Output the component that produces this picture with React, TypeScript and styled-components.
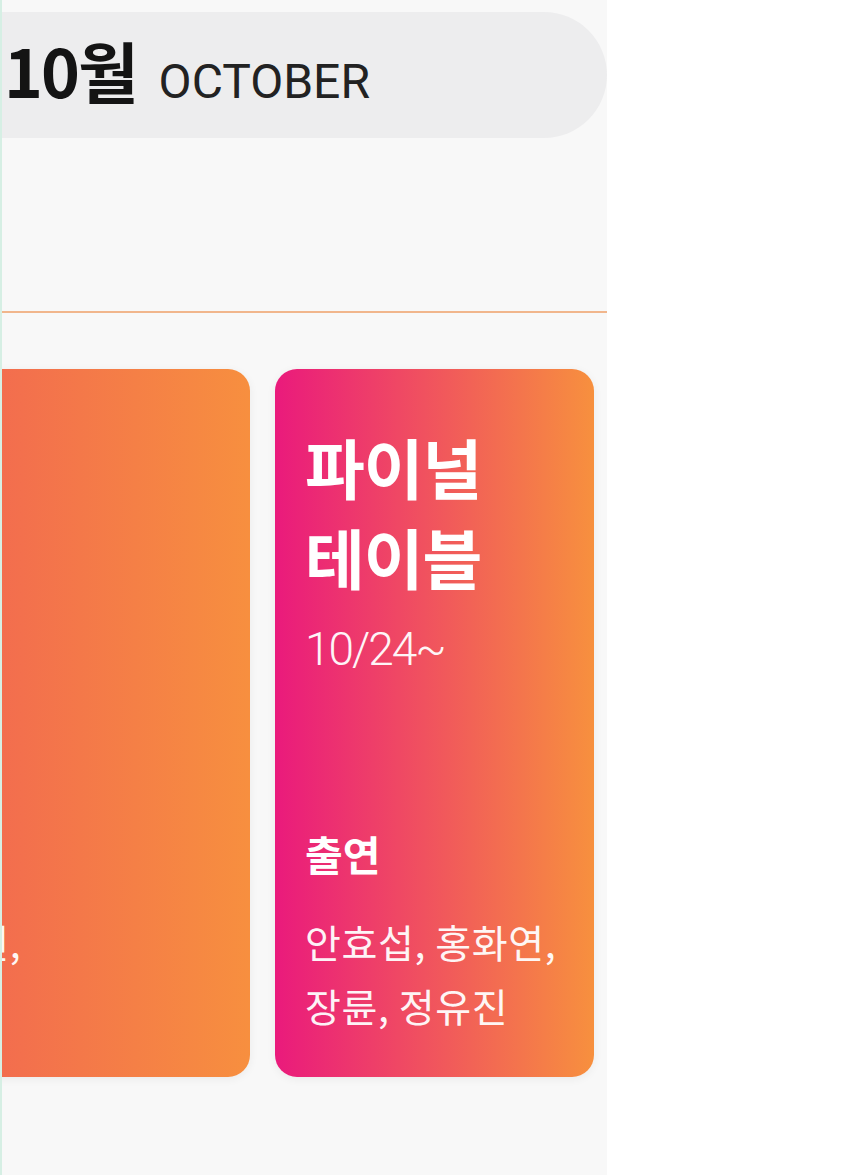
import styled, { createGlobalStyle } from 'styled-components';

const GlobalStyle = createGlobalStyle`
  body {
    margin: 0;
    background: #ffffff;
    font-family: "Noto Sans CJK KR", "Noto Sans", sans-serif;
  }
`;

const Page = styled.div`
  width: 605px;
  min-height: 1175px;
  background: #f8f8f8;
  border-left: 2px solid #d6efe4;
  overflow: hidden;
`;

const MonthBar = styled.header`
  display: flex;
  align-items: baseline;
  height: 126px;
  margin-top: 12px;
  padding-left: 2px;
  background: #ededee;
  border-radius: 0 63px 63px 0;
  line-height: 114px;
`;

const MonthKo = styled.span`
  font-family: "Noto Sans CJK KR", sans-serif;
  font-size: 66px;
  font-weight: 700;
  color: #141414;
  letter-spacing: -2px;
`;

const MonthEn = styled.span`
  margin-left: 22px;
  font-family: Roboto, "Liberation Sans", sans-serif;
  font-size: 48px;
  font-weight: 400;
  color: #222;
`;

const Divider = styled.hr`
  height: 2px;
  margin: 173px 0 0;
  border: none;
  background: #f1b68c;
`;

const CardRow = styled.div`
  display: flex;
  gap: 25px;
  margin: 56px 0 0 -262px;
`;

const Card = styled.article<{ $width: number; $from: string; $to: string }>`
  display: flex;
  flex-direction: column;
  align-items: flex-start;
  flex-shrink: 0;
  box-sizing: border-box;
  width: ${p => p.$width}px;
  height: 708px;
  padding: 52px 30px 0;
  border-radius: 22px;
  background: linear-gradient(90deg, ${p => p.$from}, ${p => p.$to});
  box-shadow: 0 2px 10px rgba(0, 0, 0, 0.06);
  color: #fff;
`;

const Title = styled.h2`
  margin: 0;
  font-size: 65px;
  font-weight: 700;
  line-height: 90px;
  letter-spacing: -1px;
`;

const Dates = styled.div`
  margin-top: 21px;
  font-family: Roboto, "Liberation Sans", sans-serif;
  font-size: 46px;
  font-weight: 300;
  letter-spacing: -2px;
  opacity: 0.95;
`;

const CastLabel = styled.div`
  margin-top: auto;
  font-size: 41px;
  font-weight: 700;
  line-height: 50px;
`;

const CastNames = styled.p`
  margin: 31px 0 40px;
  font-size: 39px;
  font-weight: 400;
  line-height: 64px;
  letter-spacing: 0.6px;
  opacity: 0.94;
  white-space: nowrap;
`;

type Show = {
  title: string[];
  dates: string;
  cast: string[];
  width: number;
  from: string;
  to: string;
};

const shows: Show[] = [
  {
    title: ['정년이'],
    dates: '10/12~',
    cast: ['김태리, 신예연,', '정은채'],
    width: 510,
    from: '#ee4a5e',
    to: '#f78f3f',
  },
  {
    title: ['파이널', '테이블'],
    dates: '10/24~',
    cast: ['안효섭, 홍화연,', '장륜, 정유진'],
    width: 319,
    from: '#ea1a7c',
    to: '#f7903e',
  },
];

const App = () => {
  return (
    <>
      <GlobalStyle />
      <Page>
        <MonthBar>
          <MonthKo>10월</MonthKo>
          <MonthEn>OCTOBER</MonthEn>
        </MonthBar>
        <Divider />
        <CardRow>
          {shows.map(show => (
            <Card key={show.dates} $width={show.width} $from={show.from} $to={show.to}>
              <Title>
                {show.title.map(line => (
                  <div key={line}>{line}</div>
                ))}
              </Title>
              <Dates>{show.dates}</Dates>
              <CastLabel>출연</CastLabel>
              <CastNames>
                {show.cast.map(line => (
                  <div key={line}>{line}</div>
                ))}
              </CastNames>
            </Card>
          ))}
        </CardRow>
      </Page>
    </>
  );
};

export default App;
